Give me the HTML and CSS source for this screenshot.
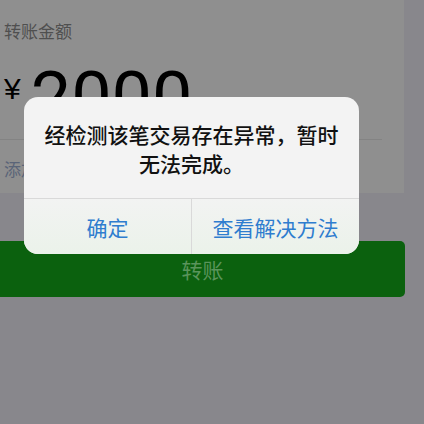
FILE: index.html
```html
<!DOCTYPE html>
<html lang="zh-CN">
<head>
    <meta charset="UTF-8">
    <meta name="viewport" content="width=device-width, initial-scale=1.0">
    <title>转账</title>
    <link rel="stylesheet" href="styles.css">
</head>
<body>
    <div class="page">
        <div class="card">
            <p class="label">转账金额</p>
            <div class="amount">
                <span class="currency">¥</span>
                <span class="value">2000</span>
            </div>
            <div class="divider"></div>
            <p class="note">添加转账说明</p>
        </div>
        <button type="button" class="transfer-button">转账</button>
    </div>

    <div class="alert">
        <p class="alert-message">经检测该笔交易存在异常，暂时无法完成。</p>
        <div class="alert-actions">
            <button type="button" class="alert-button">确定</button>
            <button type="button" class="alert-button">查看解决方法</button>
        </div>
    </div>
</body>
</html>
```

FILE: styles.css
```css
body {
    font-family: "Noto Sans CJK SC", "Noto Sans", sans-serif;
    background-color: #88878c;
    margin: 0;
    padding: 0;
}

.page {
    width: 424px;
    height: 424px;
    overflow: hidden;
}

.card {
    width: 400px;
    height: 193px;
    padding-left: 4px;
    background-color: #8f8f8f;
    overflow: hidden;
}

.label {
    margin: 0;
    padding-top: 19px;
    font-size: 17px;
    line-height: 24px;
    color: #4f4f4f;
}

.amount {
    display: flex;
    align-items: flex-start;
    height: 76px;
    margin-top: 20px;
}

.currency {
    font-family: "Liberation Sans", sans-serif;
    font-size: 30px;
    line-height: 30px;
    margin-top: 11px;
    color: #000;
}

.value {
    font-family: Roboto, "Liberation Sans", sans-serif;
    font-weight: 400;
    font-size: 72px;
    line-height: 72px;
    margin-left: 10px;
    color: #000;
}

.divider {
    height: 1px;
    margin-left: -4px;
    margin-right: 22px;
    background-color: #838383;
}

.note {
    margin: 0;
    padding-top: 17px;
    font-size: 17px;
    line-height: 24px;
    color: #5a6478;
}

.transfer-button {
    display: block;
    width: 405px;
    height: 56px;
    margin-top: 48px;
    border: none;
    border-radius: 0 5px 5px 0;
    background-color: #0b610e;
    color: #5a945b;
    font-family: "Noto Sans CJK SC", sans-serif;
    font-size: 21px;
    padding: 0;
}

/* alert sits over the page */
.alert {
    position: absolute;
    top: 97px;
    left: 24px;
    width: 335px;
    border-radius: 14px;
    background-color: #f3f3f3;
    overflow: hidden;
}

.alert-message {
    margin: 0;
    padding: 23px 18px 20px;
    font-size: 21px;
    line-height: 29px;
    font-weight: 500;
    text-align: center;
    color: #111;
}

.alert-actions {
    display: flex;
    border-top: 1px solid #d9d9d9;
    background: linear-gradient(#f2f3f2, #ebf2ea);
}

.alert-button {
    flex: 1;
    height: 55px;
    border: none;
    background: none;
    padding: 0;
    font-family: "Noto Sans CJK SC", sans-serif;
    font-size: 21px;
    color: #2f7dcf;
}

.alert-button + .alert-button {
    border-left: 1px solid #d9d9d9;
}
```
